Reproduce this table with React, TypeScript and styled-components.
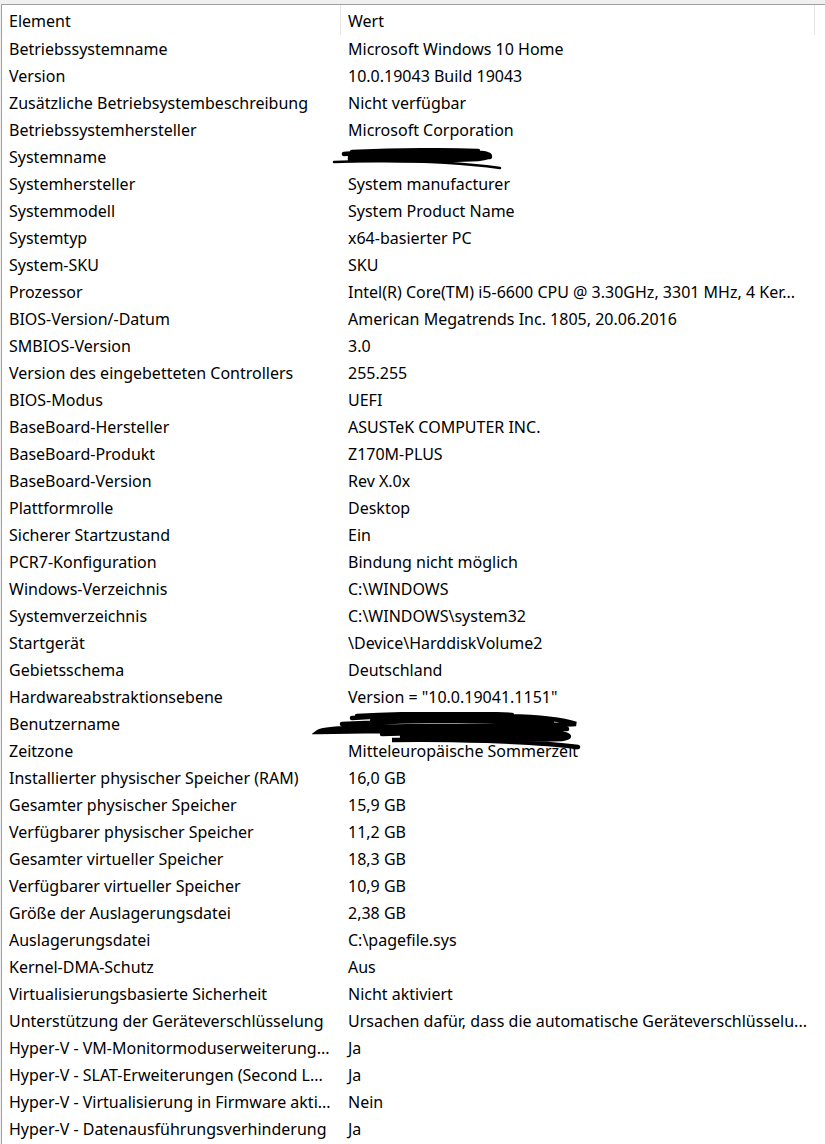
import React from "react";
import styled, { createGlobalStyle } from "styled-components";

const Global = createGlobalStyle`
  html, body { margin: 0; padding: 0; background: #ffffff; }
  body { font-family: "Noto Sans", "Open Sans", sans-serif; }
`;

const rows: [string, string][] = [
  ["Betriebssystemname", "Microsoft Windows 10 Home"],
  ["Version", "10.0.19043 Build 19043"],
  ["Zusätzliche Betriebsystembeschreibung", "Nicht verfügbar"],
  ["Betriebssystemhersteller", "Microsoft Corporation"],
  ["Systemname", ""],
  ["Systemhersteller", "System manufacturer"],
  ["Systemmodell", "System Product Name"],
  ["Systemtyp", "x64-basierter PC"],
  ["System-SKU", "SKU"],
  ["Prozessor", "Intel(R) Core(TM) i5-6600 CPU @ 3.30GHz, 3301 MHz, 4 Ker..."],
  ["BIOS-Version/-Datum", "American Megatrends Inc. 1805, 20.06.2016"],
  ["SMBIOS-Version", "3.0"],
  ["Version des eingebetteten Controllers", "255.255"],
  ["BIOS-Modus", "UEFI"],
  ["BaseBoard-Hersteller", "ASUSTeK COMPUTER INC."],
  ["BaseBoard-Produkt", "Z170M-PLUS"],
  ["BaseBoard-Version", "Rev X.0x"],
  ["Plattformrolle", "Desktop"],
  ["Sicherer Startzustand", "Ein"],
  ["PCR7-Konfiguration", "Bindung nicht möglich"],
  ["Windows-Verzeichnis", "C:\\WINDOWS"],
  ["Systemverzeichnis", "C:\\WINDOWS\\system32"],
  ["Startgerät", "\\Device\\HarddiskVolume2"],
  ["Gebietsschema", "Deutschland"],
  ["Hardwareabstraktionsebene", 'Version = "10.0.19041.1151"'],
  ["Benutzername", ""],
  ["Zeitzone", "Mitteleuropäische Sommerzeit"],
  ["Installierter physischer Speicher (RAM)", "16,0 GB"],
  ["Gesamter physischer Speicher", "15,9 GB"],
  ["Verfügbarer physischer Speicher", "11,2 GB"],
  ["Gesamter virtueller Speicher", "18,3 GB"],
  ["Verfügbarer virtueller Speicher", "10,9 GB"],
  ["Größe der Auslagerungsdatei", "2,38 GB"],
  ["Auslagerungsdatei", "C:\\pagefile.sys"],
  ["Kernel-DMA-Schutz", "Aus"],
  ["Virtualisierungsbasierte Sicherheit", "Nicht aktiviert"],
  ["Unterstützung der Geräteverschlüsselung", "Ursachen dafür, dass die automatische Geräteverschlüsselu..."],
  ["Hyper-V - VM-Monitormoduserweiterung...", "Ja"],
  ["Hyper-V - SLAT-Erweiterungen (Second L...", "Ja"],
  ["Hyper-V - Virtualisierung in Firmware akti...", "Nein"],
  ["Hyper-V - Datenausführungsverhinderung", "Ja"],
];

const Page = styled.div`
  width: 825px;
  height: 1144px;
  overflow: hidden;
  background: #f0f0f0;
  padding-top: 4px;
  box-sizing: border-box;
`;

const ListView = styled.div`
  position: relative;
  margin-left: 1px;
  border-top: 1px solid #a0a0a0;
  border-left: 1px solid #a0a0a0;
  background: #ffffff;
  height: 100%;
  color: #000000;
  font-size: 16px;
`;

const Row = styled.div`
  display: grid;
  grid-template-columns: 339px 474px 1fr;
  height: 27px;
  align-items: stretch;
`;

const HeaderRow = styled(Row)`
  height: 30px;
`;

const Cell = styled.div<{ $divider?: boolean; $shift?: number }>`
  padding-left: 7px;
  padding-top: ${(p) => p.$shift ?? 2}px;
  white-space: nowrap;
  overflow: hidden;
  line-height: 25px;
  box-sizing: border-box;
  border-right: ${(p) => (p.$divider ? "1px solid #e5e5e5" : "none")};
`;

const Scribble = styled.svg`
  position: absolute;
  pointer-events: none;
`;

export default function App() {
  return (
    <>
      <Global />
      <Page>
        <ListView>
          <HeaderRow>
            <Cell $divider $shift={4}>Element</Cell>
            <Cell $divider $shift={4}>Wert</Cell>
            <Cell />
          </HeaderRow>
          {rows.map(([k, v], i) => (
            <Row key={i}>
              <Cell>{k}</Cell>
              <Cell>{v}</Cell>
              <Cell />
            </Row>
          ))}
          <Scribble
            style={{ left: 326, top: 143, width: 178, height: 24 }}
            viewBox="0 0 178 24"
          >
            <path
              d="M16 6 C50 3 110 3 142 4 C165 5 168 9 150 11 C110 13 60 12 20 12 C50 8 120 7 162 9 M22 9 C70 5 120 6 158 7 M24 4 C70 2 120 2 150 3"
              fill="none"
              stroke="#000"
              strokeWidth="4.5"
              strokeLinecap="round"
            />
            <path
              d="M6 14 C60 12 120 13 172 20"
              fill="none"
              stroke="#000"
              strokeWidth="2.5"
              strokeLinecap="round"
            />
          </Scribble>
          <Scribble
            style={{ left: 310, top: 707, width: 272, height: 38 }}
            viewBox="0 0 272 38"
          >
            <path
              d="M40 6 C100 2 160 2 195 4 C230 5 252 8 264 12 C230 14 150 13 60 15 C30 16 10 17 6 20 C60 19 150 18 240 20 C258 22 262 25 250 27 C200 28 120 27 80 28 C130 27 220 29 266 35 M30 12 C100 8 180 8 240 11 M70 22 C130 20 200 21 250 24 M60 9 C120 6 190 6 230 7 M40 17 C120 15 200 15 255 17 M90 25 C150 23 210 24 245 26 M45 4 C100 1 170 1 200 3"
              fill="none"
              stroke="#000"
              strokeWidth="4.5"
              strokeLinecap="round"
            />
          </Scribble>
        </ListView>
      </Page>
    </>
  );
}
